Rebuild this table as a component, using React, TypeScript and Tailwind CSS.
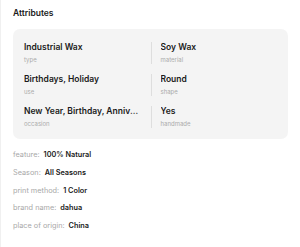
const attrs = [
  { value: "Industrial Wax", label: "type" },
  { value: "Soy Wax", label: "material" },
  { value: "Birthdays, Holiday", label: "use" },
  { value: "Round", label: "shape" },
  { value: "New Year, Birthday, Anniversary, Christmas", label: "occasion" },
  { value: "Yes", label: "handmade" },
];

const specs = [
  { label: "feature:", value: "100% Natural" },
  { label: "Season:", value: "All Seasons" },
  { label: "print method:", value: "1 Color" },
  { label: "brand name:", value: "dahua" },
  { label: "place of origin:", value: "China" },
];

export default function App() {
  return (
    <div
      className="w-[300px] h-[247px] bg-white overflow-hidden border-l border-[#f0f0f0]"
      style={{ fontFamily: "Inter, 'Noto Sans', sans-serif" }}
    >
      <div className="px-3 pt-[8px]">
        {/* Heading */}
        <h2 className="text-[8.5px] leading-[11px] font-semibold text-[#1a1a1a]">Attributes</h2>

        {/* Attribute grid */}
        <div className="mt-[10px] bg-[#f4f4f4] rounded-[7px] px-[11px] pt-[13px] pb-[11px] grid grid-cols-2 gap-y-[10px]">
          {attrs.map((a, i) => (
            <div
              key={a.label}
              className={
                i % 2 === 1
                  ? "border-l border-[#dedede] pl-[9px] min-w-0"
                  : "pr-[8px] min-w-0"
              }
            >
              <div className="text-[8.5px] leading-[11px] font-semibold text-[#1a1a1a] truncate">
                {a.value}
              </div>
              <div className="mt-[3px] text-[6px] leading-[8px] text-[#ababab]">{a.label}</div>
            </div>
          ))}
        </div>

        {/* Spec list */}
        <div className="mt-[11px] flex flex-col gap-[7.8px]">
          {specs.map((s) => (
            <div key={s.label} className="flex items-center gap-[4px] text-[7.3px] leading-[10px]">
              <span className="text-[#a8a8a8]">{s.label}</span>
              <span className="font-semibold text-[#1a1a1a]">{s.value}</span>
            </div>
          ))}
        </div>
      </div>
    </div>
  );
}
